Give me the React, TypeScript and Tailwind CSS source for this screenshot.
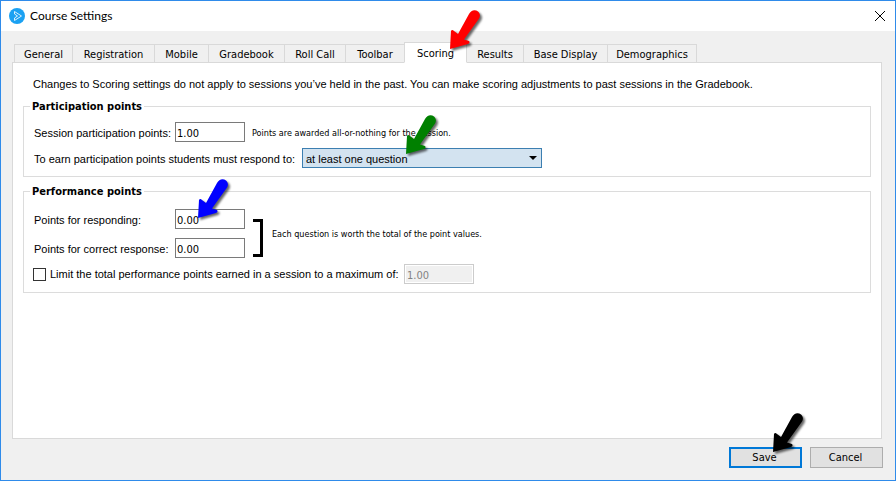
import React, { useState } from 'react';
import clsx from 'clsx';

const tabs = [
    { name: 'General', width: 'w-[59px]' },
    { name: 'Registration', width: 'w-[83px]' },
    { name: 'Mobile', width: 'w-[55px]' },
    { name: 'Gradebook', width: 'w-[77px]' },
    { name: 'Roll Call', width: 'w-[62px]' },
    { name: 'Toolbar', width: 'w-[60px]' },
    { name: 'Scoring', width: 'w-[63px]' },
    { name: 'Results', width: 'w-[58px]' },
    { name: 'Base Display', width: 'w-[85px]' },
    { name: 'Demographics', width: 'w-[90px]' },
];

const Arrow = ({ className }: { className: string }) => (
    <svg viewBox="0 0 36 44" fill="currentColor" aria-hidden="true" className={clsx('pointer-events-none absolute z-20 h-[44px] w-[36px] overflow-visible drop-shadow-[2px_2px_1px_rgba(0,0,0,0.6)]', className)}>
        <path d="M1 40 L2 22 Q3 20 5 22 L9 25 L20 5 C22 1 26 0 29 2.500 C32 5 31 9 29 11 L15 30.500 L20 32 Q21.500 34 19 35 Z" />
    </svg>
);

const PointsInput = ({ id, value, label, disabled = false }: { id: string; value: string; label?: string; disabled?: boolean }) => (
    <input
        id={id}
        type="text"
        aria-label={label}
        defaultValue={value}
        disabled={disabled}
        className="h-5 w-[70px] border border-[#7a7a7a] bg-white px-px pt-[2px] font-['DejaVu_Sans_Condensed','DejaVu_Sans',sans-serif] outline-none disabled:border-[#cccccc] disabled:bg-[#f0f0f0] disabled:px-[2px] disabled:text-[#838383] disabled:shadow-[inset_0_0_0_1px_white]"
    />
);

const Note = ({ className, children }: { className: string; children: React.ReactNode }) => (
    <span className={clsx("font-['DejaVu_Sans_Condensed','DejaVu_Sans',sans-serif] text-[9px]", className)}>{children}</span>
);

const Group = ({ title, className, children }: { title: string; className?: string; children: React.ReactNode }) => (
    <fieldset className={clsx('min-w-0 border border-[#dcdcdc] px-[9px]', className)}>
        <legend className="-ml-[3px] px-[2px] pt-[2px] font-['DejaVu_Sans_Condensed','DejaVu_Sans',sans-serif] text-[11px] leading-[14px] font-bold">{title}</legend>
        {children}
    </fieldset>
);

export default function App() {
    const [activeTab, setActiveTab] = useState('Scoring');

    return (
        <div className="flex min-h-screen flex-col border border-[#2f8bea] bg-[#f0f0f0] font-['Liberation_Sans',Arial,sans-serif] text-[11px] leading-[14px] text-black">
            <header className="flex h-[30px] items-center bg-white pr-[9px] pl-2">
                <svg viewBox="0 0 16 16" className="size-4" aria-hidden="true">
                    <circle cx="8" cy="8" r="8" fill="#1ba1f2" />
                    <path d="M5.500 6 V3.500 L12.500 8 L5.500 12.500 V10 L8.500 8 Z" fill="none" stroke="#d9f0ff" strokeWidth="1" />
                </svg>
                <h1 className="ml-[5px] font-['Lato','Open_Sans',sans-serif] text-[12px] leading-4">Course Settings</h1>
                <button type="button" aria-label="Close" className="ml-auto">
                    <svg viewBox="0 0 12 12" className="size-3" fill="none" stroke="black" strokeWidth="1">
                        <path d="M1 1 L11 11 M11 1 L1 11" />
                    </svg>
                </button>
            </header>

            <main className="flex flex-1 flex-col px-[11px] pt-[11px]">
                <div role="tablist" className="relative z-10 -mb-px flex items-end pl-[2px] font-['DejaVu_Sans_Condensed','DejaVu_Sans',sans-serif]">
                    {tabs.map(tab => (
                        <button
                            key={tab.name}
                            type="button"
                            role="tab"
                            aria-selected={tab.name === activeTab}
                            onClick={() => setActiveTab(tab.name)}
                            className={clsx(
                                'relative -mr-px border border-[#d9d9d9] pt-[2px] text-center whitespace-nowrap',
                                tab.width,
                                tab.name === activeTab ? 'z-10 h-[21px] border-b-white bg-white' : 'h-[19px] bg-[#f0f0f0]'
                            )}
                        >
                            {tab.name}
                            {tab.name === 'Scoring' && <Arrow className="-top-[34px] left-[44px] text-[#ff0000]" />}
                        </button>
                    ))}
                </div>

                <section role="tabpanel" className="mr-[2px] flex-1 border border-[#d9d9d9] bg-white px-[10px] pt-[14px]">
                    <p className="px-[10px]">Changes to Scoring settings do not apply to sessions you’ve held in the past. You can make scoring adjustments to past sessions in the Gradebook.</p>

                    <Group title="Participation points" className="mt-[7px] pb-2">
                        <div className="mt-2 ml-px flex items-center">
                            <label htmlFor="session-points" className="w-[141px] pt-[2px] whitespace-nowrap">Session participation points:</label>
                            <PointsInput id="session-points" value="1.00" />
                            <Note className="ml-[7px] pt-px">Points are awarded all-or-nothing for the session.</Note>
                        </div>
                        <div className="mt-[6px] ml-px flex items-center">
                            <label htmlFor="respond-to" className="w-[268px] pt-[2px] whitespace-nowrap">To earn participation points students must respond to:</label>
                            <div className="relative">
                                <select id="respond-to" className="block h-5 w-[240px] appearance-none border border-[#3c7fb1] bg-[#d3e3f0] px-[3px] pt-px outline-none">
                                    <option>at least one question</option>
                                </select>
                                <svg viewBox="0 0 8 4" className="pointer-events-none absolute top-2 right-[5px] h-1 w-2" aria-hidden="true">
                                    <path d="M0 0 H8 L4 4 Z" />
                                </svg>
                                <Arrow className="-top-[34px] left-[103px] text-[#008000]" />
                            </div>
                        </div>
                    </Group>

                    <Group title="Performance points" className="mt-[6px] pb-2">
                        <div className="mt-[10px] ml-px flex items-center">
                            <div className="flex flex-col gap-[9px]">
                                <div className="relative flex items-center">
                                    <label htmlFor="responding" className="w-[141px] pt-[2px] whitespace-nowrap">Points for responding:</label>
                                    <PointsInput id="responding" value="0.00" />
                                    <Arrow className="-top-[31px] left-[163px] text-[#0000ff]" />
                                </div>
                                <div className="flex items-center">
                                    <label htmlFor="correct" className="w-[141px] pt-[2px] whitespace-nowrap">Points for correct response:</label>
                                    <PointsInput id="correct" value="0.00" />
                                </div>
                            </div>
                            <div className="mt-2 ml-2 h-[38px] w-[10px] border-y-[3px] border-r-[3px] border-black" />
                            <Note className="ml-[9px]">Each question is worth the total of the point values.</Note>
                        </div>
                        <div className="mt-[6px] flex items-center">
                            <input id="limit" type="checkbox" className="size-[13px] appearance-none border border-[#333333] bg-white checked:bg-[#333333]" />
                            <label htmlFor="limit" className="ml-1 w-[354px] whitespace-nowrap">Limit the total performance points earned in a session to a maximum of:</label>
                            <PointsInput id="maximum" value="1.00" label="Maximum performance points" disabled />
                        </div>
                    </Group>
                </section>
            </main>

            <footer className="flex justify-end gap-2 pt-2 pr-3 pb-3 font-['DejaVu_Sans_Condensed','DejaVu_Sans',sans-serif]">
                <button type="button" className="relative h-[21px] w-[73px] border-2 border-[#0078d7] bg-[#e1e1e1] pt-px pr-[2px]">
                    Save
                    <Arrow className="-top-[37px] left-[41px] text-black" />
                </button>
                <button type="button" className="h-[21px] w-[73px] border border-[#adadad] bg-[#e1e1e1] pt-px pr-[2px]">Cancel</button>
            </footer>
        </div>
    );
}
